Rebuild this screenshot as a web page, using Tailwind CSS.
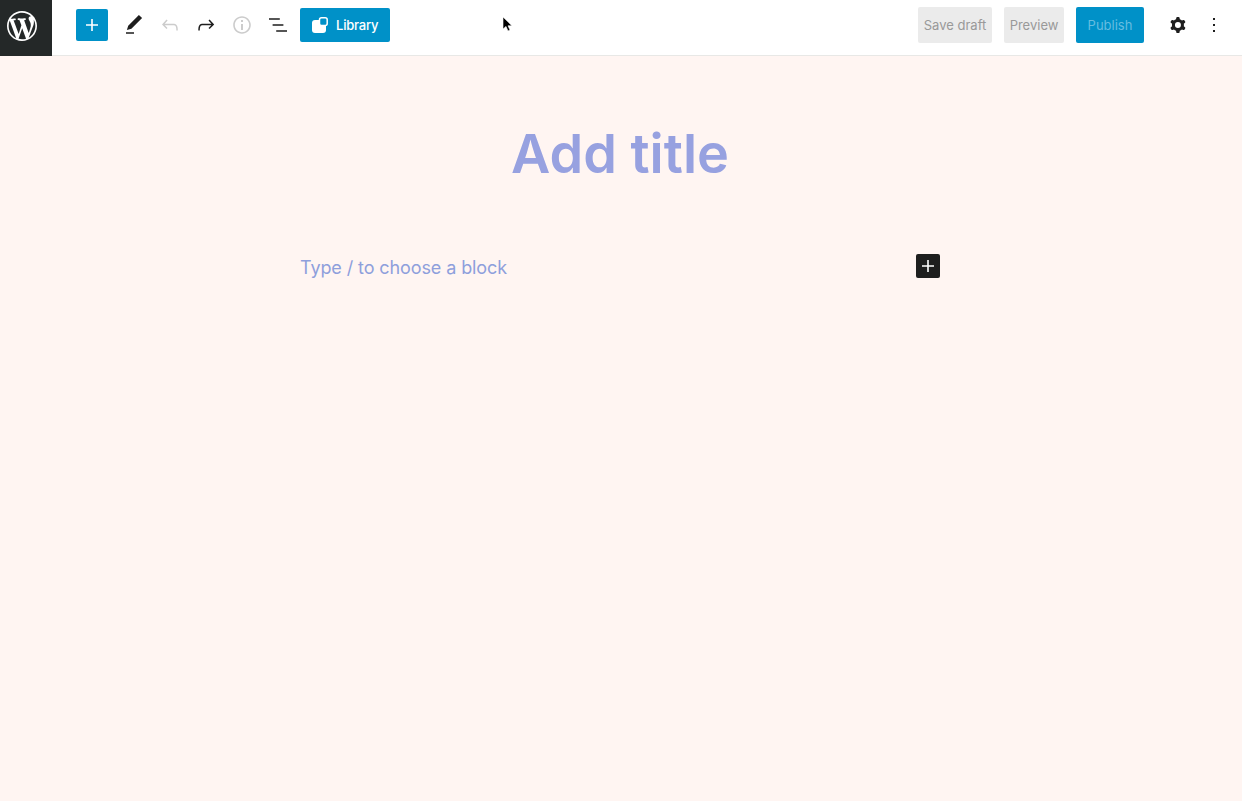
<!DOCTYPE html>
<html>
<head>
    <script src="https://cdn.jsdelivr.net/npm/@tailwindcss/browser@4"></script>
</head>
<body class="relative h-[801px] w-[1242px] overflow-hidden bg-[#fff5f2] font-['Inter',sans-serif]">
    <header class="flex h-[56px] items-center border-b border-[#e8e8e6] bg-white pb-[5px]">
        <a class="-mb-[5px] flex h-[56px] w-[52px] shrink-0 items-center justify-center self-start bg-[#242828] pr-[8px] pb-[4px]">
            <svg class="h-[30px] w-[30px] fill-white" viewBox="0 0 20 20"><path d="M20 10c0-5.51-4.49-10-10-10C4.48 0 0 4.49 0 10c0 5.52 4.48 10 10 10 5.51 0 10-4.48 10-10zM7.78 15.37L4.37 6.22c.55-.02 1.17-.08 1.17-.08.5-.06.44-1.13-.06-1.11 0 0-1.45.11-2.37.11-.18 0-.37 0-.58-.01C4.12 2.69 6.87 1.11 10 1.11c2.33 0 4.45.87 6.05 2.34-.68-.11-1.65.39-1.65 1.58 0 .74.45 1.36.9 2.1.35.61.55 1.36.55 2.46 0 1.49-1.4 5-1.4 5l-3.03-8.37c.54-.02.82-.17.82-.17.5-.05.44-1.25-.06-1.22 0 0-1.44.12-2.38.12-.87 0-2.33-.12-2.33-.12-.5-.03-.56 1.2-.06 1.22l.92.08 1.26 3.41zM17.41 10c.24-.64.74-1.87.43-4.25.7 1.29 1.05 2.71 1.05 4.25 0 3.29-1.73 6.24-4.4 7.78.97-2.59 1.94-5.2 2.92-7.78zM6.1 18.09C3.12 16.65 1.11 13.53 1.11 10c0-1.3.23-2.48.72-3.59C3.25 10.3 4.67 14.2 6.1 18.09zm4.03-6.63l2.58 6.98c-.86.29-1.76.45-2.71.45-.79 0-1.57-.11-2.29-.33.81-2.38 1.62-4.74 2.42-7.1z"/></svg>
        </a>

        <div class="ml-[24px] flex items-center">
            <button class="flex h-[32px] w-[32px] items-center justify-center rounded-[2px] bg-[#0091c8]">
                <svg class="h-6 w-6 fill-white" viewBox="0 0 24 24"><path d="M18 11.2h-5.2V6h-1.6v5.2H6v1.6h5.2V18h1.6v-5.2H18z"/></svg>
            </button>
            <div class="ml-[14px] flex items-center gap-[12px]">
                <svg class="h-6 w-6 fill-[#1e1e1e]" viewBox="0 0 24 24"><path d="M20.1 5.1L16.9 2 6.2 12.7l-1.3 4.4 4.5-1.3L20.1 5.1zM4 20.8h8v-1.5H4v1.5z"/></svg>
                <svg class="h-6 w-6 fill-[#cccccc]" viewBox="0 0 24 24"><path d="M18.3 11.7c-.6-.6-1.4-.9-2.3-.9H6.7l2.9-3.3-1.1-1-4.5 5L8.5 16l1-1-2.7-2.7H16c.5 0 .9.2 1.3.5 1 1 1 3.4 1 4.5v.3h1.5v-.2c0-1.5 0-4.3-1.5-5.7z"/></svg>
                <svg class="h-6 w-6 fill-[#1e1e1e]" viewBox="0 0 24 24"><path d="M15.6 6.5l-1.1 1 2.9 3.3H8c-.9 0-1.7.3-2.3.9-1.4 1.5-1.4 4.2-1.4 5.6v.2h1.5v-.3c0-1.1 0-3.5 1-4.5.3-.3.7-.5 1.3-.5h9.2L14.5 15l1.1 1.1 4.6-4.6-4.6-5z"/></svg>
                <svg class="h-6 w-6 fill-[#cccccc]" viewBox="0 0 24 24"><path d="M12 3.2c-4.8 0-8.8 3.9-8.8 8.8 0 4.8 3.9 8.8 8.8 8.8 4.8 0 8.8-3.9 8.8-8.8 0-4.8-4-8.8-8.8-8.8zm0 16c-4 0-7.2-3.3-7.2-7.2C4.8 8 8 4.8 12 4.8s7.2 3.3 7.2 7.2c0 4-3.2 7.2-7.2 7.2zM11 17h2v-6h-2v6zm0-8h2V7h-2v2z"/></svg>
                <svg class="h-6 w-6 fill-[#1e1e1e]" viewBox="0 0 24 24"><path d="M13.8 5.2H3v1.5h10.8V5.2zm-3.6 12v1.5H21v-1.5H10.2zm7.2-6H6.6v1.5h10.8v-1.5z"/></svg>
            </div>
            <button class="ml-[10px] flex h-[34px] w-[90px] items-center rounded-[2px] bg-[#0091c8] pl-[12px] text-[13px] font-medium tracking-[-0.2px] text-white">
                <svg class="mr-[8px] h-[16px] w-[16px]" viewBox="0 0 16 16"><rect x="0" y="3" width="14" height="13" rx="3" fill="white"/><rect x="7.5" y="0.8" width="7.7" height="7.7" rx="2" fill="#0091c8" stroke="white" stroke-width="1.5"/></svg>
                <span class="pt-[1px]">Library</span>
            </button>
        </div>

        <div class="ml-auto flex items-center pr-[16px]">
            <button class="h-[36px] w-[74px] rounded-[2px] bg-[#ebebeb] pt-[1px] text-[13px] text-[#999999]">Save draft</button>
            <button class="ml-[12px] h-[36px] w-[60px] rounded-[2px] bg-[#ebebeb] pt-[1px] text-[13px] text-[#999999]">Preview</button>
            <button class="ml-[12px] h-[36px] w-[68px] rounded-[2px] bg-[#0091c8] pt-[1px] text-[13px] text-[#66bde0]">Publish</button>
            <svg class="ml-[22px] h-6 w-6 fill-[#1e1e1e]" viewBox="0 0 24 24"><path fill-rule="evenodd" clip-rule="evenodd" d="M10.289 4.836A1 1 0 0111.275 4h1.306a1 1 0 01.987.836l.244 1.466c.787.26 1.503.679 2.108 1.218l1.393-.522a1 1 0 011.216.437l.653 1.13a1 1 0 01-.23 1.273l-1.148.944a6.025 6.025 0 010 2.435l1.149.946a1 1 0 01.23 1.272l-.653 1.13a1 1 0 01-1.216.437l-1.394-.522c-.605.54-1.32.958-2.108 1.218l-.244 1.466a1 1 0 01-.987.836h-1.306a1 1 0 01-.986-.836l-.244-1.466a5.995 5.995 0 01-2.108-1.218l-1.394.522a1 1 0 01-1.217-.436l-.653-1.131a1 1 0 01.23-1.272l1.149-.946a6.026 6.026 0 010-2.435l-1.148-.944a1 1 0 01-.23-1.272l.653-1.131a1 1 0 011.217-.437l1.393.522a5.994 5.994 0 012.108-1.218l.244-1.466zM14.929 12a3 3 0 11-6 0 3 3 0 016 0z"/></svg>
            <svg class="ml-[12px] h-6 w-6 fill-[#1e1e1e]" viewBox="0 0 24 24"><path d="M13 19h-2v-2h2v2zm0-6h-2v-2h2v2zm0-6h-2V5h2v2z"/></svg>
        </div>
    </header>

    <main class="ml-[300px] w-[640px]">
        <h1 class="pt-[60px] text-center text-[54px] leading-[76px] font-semibold text-[#97a1e0]">Add title</h1>
        <div class="mt-[62px] flex items-start justify-between">
            <p class="text-[18px] leading-[28px] tracking-[-0.1px] text-[#8e9fdc]">Type / to choose a block</p>
            <button class="flex h-[24px] w-[24px] items-center justify-center rounded-[2px] bg-[#1e1e1e]">
                <svg class="h-6 w-6 fill-white" viewBox="0 0 24 24"><path d="M18 11.2h-5.2V6h-1.6v5.2H6v1.6h5.2V18h1.6v-5.2H18z"/></svg>
            </button>
        </div>
    </main>

    <!-- mouse pointer -->
    <svg class="absolute top-[16px] left-[502px] h-[18px] w-[12px]" viewBox="0 0 12 18"><path d="M1 1v12l3-2.6L6 15l2-1-2-4.2h4z" fill="#000" stroke="#fff" stroke-width="0.6"/></svg>
</body>
</html>
